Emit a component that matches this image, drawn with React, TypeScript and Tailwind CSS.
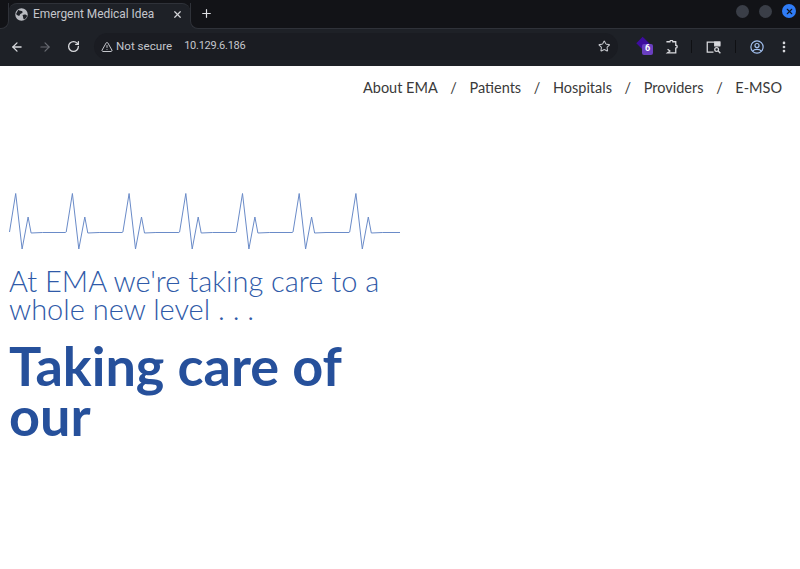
import { ArrowLeft, ArrowRight, MoreVertical, Plus, RotateCw, Star, TriangleAlert, X } from "lucide-react";

const NAV = ["About EMA", "Patients", "Hospitals", "Providers", "E-MSO"];

// one beat repeats every 56.7px
function pulsePoints() {
  const pts: string[] = [];
  for (let i = 0; i < 7; i++) {
    const x = 9.5 + i * 56.7;
    pts.push(`${x},232`, `${x + 6.2},193.5`, `${x + 12.6},249`, `${x + 18.6},217`, `${x + 21.6},233`, `${x + 33},232.5`, `${x + 56},232.5`);
  }
  return pts.join(" ");
}

function BrowserChrome() {
  return (
    <div className="flex flex-col h-[66px] bg-[#121317] font-['Roboto',sans-serif] text-[#c4c6cc]">
      <div className="flex h-[29px]">
        <div className="w-[9px] bg-[#1e2127] mt-[3px]">
          <div className="h-full rounded-br-lg border-r border-b border-[#2f3239] bg-[#121317]" />
        </div>
        <div className="flex items-start mt-[3px] w-[181px] rounded-t-lg border-t border-[#2f3239] bg-[#1e2127] pl-[6px] pr-[7px] pt-[2px] text-[11.9px]">
          <svg width="13" height="13" viewBox="0 0 24 24" className="shrink-0 mt-[1.5px]">
            <circle cx="12" cy="12" r="11.5" fill="#b9bbc1" />
            <path d="M6 3c3 3 7 1 8 4s-5 3-5 6-5 1-7-2zM14 13c3-2 7-1 8 1s-3 7-5 7-2-5-3-8z" fill="#1e2127" />
          </svg>
          <span className="ml-[5px] flex-1 whitespace-nowrap leading-[16px]">Emergent Medical Idea</span>
          <X size={11} strokeWidth={2.6} className="shrink-0 mt-[2.5px] text-[#d5d6da]" />
        </div>
        <div className="flex flex-1 bg-[#1e2127] mt-[3px]">
          <div className="flex flex-1 h-full rounded-bl-lg border-l border-b border-[#2f3239] bg-[#121317]">
            <div className="flex items-center justify-center -ml-px w-[32px] h-[20px]">
              <Plus size={13} strokeWidth={2.2} className="text-[#dfe0e4]" />
            </div>
          </div>
        </div>
        <div className="absolute right-[4px] top-[4px] flex items-center gap-[10px] h-[14px]">
          <span className="h-[13px] w-[13px] rounded-full bg-[#3a3e47]" />
          <span className="h-[13px] w-[13px] rounded-full bg-[#3a3e47]" />
          <span className="flex items-center justify-center h-[14px] w-[14px] rounded-full bg-[#2f7cf6]">
            <X size={9} strokeWidth={3} className="text-[#10141c]" />
          </span>
        </div>
      </div>
      <div className="flex flex-1 items-center bg-[#1e2127] pl-[10px] pr-[9px] pb-[2px]">
        <ArrowLeft size={14} strokeWidth={2.2} className="text-[#d9dade]" />
        <ArrowRight size={14} strokeWidth={2} className="ml-[14px] text-[#686b72]" />
        <RotateCw size={13} strokeWidth={2.4} className="ml-[15px] text-[#d9dade]" />
        <div className="flex flex-1 items-center ml-[14px] h-[27px] rounded-full bg-[#1a1c22] pl-[7px] pr-[12px]">
          <TriangleAlert size={12} className="text-[#c4c6cc]" />
          <span className="ml-[3px] whitespace-nowrap text-[11.6px]">Not secure</span>
          <span className="ml-[12px] whitespace-nowrap text-[11px] tracking-[-0.25px]">10.129.6.186</span>
          <Star size={12.5} strokeWidth={2} className="ml-auto mr-[-4px] text-[#c4c6cc]" />
        </div>
        <div className="relative w-[14px] h-[14px] ml-[19px] mr-[11px]">
          <div className="absolute left-[1px] top-[-1px] w-[10px] h-[9px] rotate-45 bg-[#3d0c9e]" />
          <div className="absolute left-[5px] top-[4px] flex items-center justify-center w-[11px] h-[11px] rounded-[2px] bg-[#6a3fc0] text-[9px] font-bold text-white">6</div>
        </div>
        <svg width="15" height="14" viewBox="0 0 24 24" fill="none" stroke="#d9dade" strokeWidth="2.2" className="ml-[1px]">
          <path d="M5 3h6a2.5 2.5 0 0 1 5 0h5v6a2.5 2.5 0 0 1 0 5v8H7l4-3-4-3" />
        </svg>
        <span className="ml-[13px] h-[13px] w-px bg-[#0f1013]" />
        <svg width="15" height="14" viewBox="0 0 24 22" fill="none" stroke="#d9dade" strokeWidth="2" className="ml-[14px]">
          <path d="M22 9V3H2v16h10" />
          <path d="M14 3v6h8V3z" fill="#d9dade" />
          <circle cx="17" cy="15" r="3" />
          <path d="M19.5 17.5L23 21" />
        </svg>
        <span className="ml-[14px] h-[13px] w-px bg-[#0f1013]" />
        <svg width="14" height="14" viewBox="0 0 24 24" fill="none" stroke="#a3c1f0" strokeWidth="2" className="ml-[14px]">
          <circle cx="12" cy="12" r="10.5" />
          <circle cx="12" cy="9.5" r="3.5" />
          <path d="M5 19c2-4 12-4 14 0" />
        </svg>
        <MoreVertical size={14} strokeWidth={2.6} className="ml-[13px] text-[#d9dade]" />
      </div>
    </div>
  );
}

export default function App() {
  return (
    <div className="relative h-[569px] w-[800px] overflow-hidden bg-white font-['Lato',sans-serif]">
      <BrowserChrome />
      <nav className="flex justify-end items-center h-[43px] pr-[18px] text-[14.5px] text-[#3a3a3a]">
        {NAV.map((item, i) => (
          <span key={item} className="flex items-center">
            {i > 0 && <span className="mx-[12.6px]">/</span>}
            <span>{item}</span>
          </span>
        ))}
      </nav>
      <main className="pl-[9px] w-[400px]">
        <svg width="400" height="70" viewBox="0 185 400 70" className="block -ml-[9px] mt-[76px]">
          <polyline points={pulsePoints()} fill="none" stroke="#6a8bc8" strokeWidth="1" />
        </svg>
        <p className="mt-[12px] text-[29px] leading-[28px] font-light text-[#2f5aa8]">
          At EMA we're taking care to a whole new level . . .
        </p>
        <h1 className="mt-[18px] text-[54px] leading-[50px] font-bold text-[#26509b]">
          Taking care of our
        </h1>
      </main>
    </div>
  );
}
